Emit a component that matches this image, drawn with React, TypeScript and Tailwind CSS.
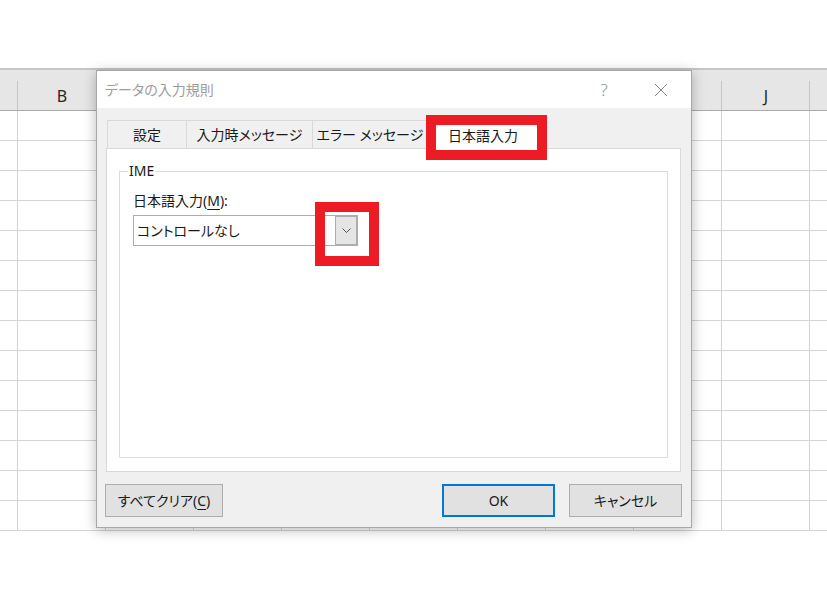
const cols = ["B", "C", "D", "E", "F", "G", "H", "I", "J"]
const rows = Array.from({ length: 14 }, (_, i) => i)

export default function App() {
  return (
    <div className="relative w-[827px] h-[599px] overflow-hidden bg-white text-[#1a1a1a] font-['Noto_Sans','Noto_Sans_CJK_JP',sans-serif] [font-feature-settings:'palt']">
      <Sheet />
      <Dialog />
      {/* red annotation boxes */}
      <div className="absolute z-20 left-[426px] top-[115px] w-[121px] h-[45px] border-[10px] border-[#ed1c24]" />
      <div className="absolute z-20 left-[315px] top-[202px] w-[64px] h-[64px] border-[10px] border-[#ed1c24]" />
    </div>
  )
}

function Sheet() {
  return (
    <div className="pt-[68px]">
      <div className="flex h-[43px] border-t-2 border-b border-t-[#c6c6c6] border-b-[#ababab] bg-[#e6e6e6]">
        <HeadCell w="w-[18px]" />
        {cols.map(c => <HeadCell key={c} w="w-[88px]" label={c} />)}
        <HeadCell w="w-[30px]" />
      </div>
      {rows.map(r => (
        <div key={r} className="flex h-[30px]">
          <div className="w-[18px] shrink-0 border-r border-b border-[#d4d4d4]" />
          {cols.map(c => <div key={c} className="w-[88px] shrink-0 border-r border-b border-[#d4d4d4]" />)}
          <div className="w-[30px] shrink-0 border-b border-[#d4d4d4]" />
        </div>
      ))}
    </div>
  )
}

function HeadCell({ w, label }: { w: string; label?: string }) {
  return (
    <div className={`${w} shrink-0 relative flex items-center justify-center pt-[12px] text-[16px] text-[#262626] font-['Noto_Sans',sans-serif]`}>
      {label}
      <span className="absolute right-0 top-[11px] bottom-0 w-px bg-[#c6c6c6]" />
    </div>
  )
}

function Dialog() {
  return (
    <div className="absolute z-10 left-[96px] top-[70px] w-[596px] h-[458px] border border-[#a8a8a8] bg-[#f0f0f0] flex flex-col shadow-[0_2px_12px_rgba(0,0,0,0.28)] text-[14px]">
      {/* title bar */}
      <div className="h-[37px] bg-white flex items-center pl-[8px]">
        <span className="text-[#9d9d9d]">データの入力規則</span>
        <div className="ml-auto w-[46px] flex justify-center text-[#8f8f8f] text-[17px] font-light">?</div>
        <div className="ml-[11px] mr-[7px] w-[46px] flex justify-center">
          <svg width="14" height="14" viewBox="0 0 14 14" fill="none" stroke="#8a8a8a" strokeWidth="1">
            <path d="M1 1L13 13M13 1L1 13" />
          </svg>
        </div>
      </div>

      {/* tabs + panel */}
      <div className="pl-[9px] pr-[10px] pt-[12px]">
        <div className="flex h-[28px] pl-px items-end">
          <Tab w="w-[80px]" first>設定</Tab>
          <Tab w="w-[126px]">入力時メッセージ</Tab>
          <Tab w="w-[115px]">エラー メッセージ</Tab>
          <div className="w-[111px] h-[31px] -mb-px relative bg-white border-t border-r border-[#d9d9d9] flex items-center justify-center pt-[2px]">
            日本語入力
          </div>
        </div>
        <div className="h-[324px] bg-white border border-[#d9d9d9] px-[12px] pt-[22px]">
          <div className="relative h-[287px] border border-[#dcdcdc] pl-[13px] pt-[19px]">
            <span className="absolute left-[8px] -top-[11px] px-px bg-white leading-[20px]">IME</span>
            <div className="leading-[20px]">
              日本語入力(<span className="underline underline-offset-[3px]">M</span>):
            </div>
            <div className="mt-[4px] w-[225px] h-[31px] border border-[#adadad] bg-white flex">
              <div className="flex-1 pl-[3px] flex items-center">コントロールなし</div>
              <div className="w-[22px] border border-[#adadad] bg-[#e5e5e5] flex items-center justify-center">
                <svg width="9" height="5" viewBox="0 0 9 5" fill="none" stroke="#555" strokeWidth="1">
                  <path d="M0.5 0.5L4.5 4.5L8.5 0.5" />
                </svg>
              </div>
            </div>
          </div>
        </div>
      </div>

      {/* buttons */}
      <div className="flex pl-[8px] pr-[9px] mt-[12px]">
        <Btn w="w-[118px]">すべてクリア(<span className="underline underline-offset-[3px]">C</span>)</Btn>
        <div className="ml-auto flex gap-[14px]">
          <button className="w-[113px] h-[33px] border-2 border-[#0078d7] bg-[#e1e1e1] flex items-center justify-center">OK</button>
          <Btn w="w-[113px]">キャンセル</Btn>
        </div>
      </div>
    </div>
  )
}

function Tab({ w, first, children }: { w: string; first?: boolean; children: React.ReactNode }) {
  return (
    <div className={`${w} h-[28px] border-t border-r ${first ? "border-l" : ""} border-[#d9d9d9] flex items-center justify-center`}>
      {children}
    </div>
  )
}

function Btn({ w, children }: { w: string; children: React.ReactNode }) {
  return (
    <button className={`${w} h-[33px] border border-[#adadad] bg-[#e1e1e1] flex items-center justify-center`}>
      {children}
    </button>
  )
}
